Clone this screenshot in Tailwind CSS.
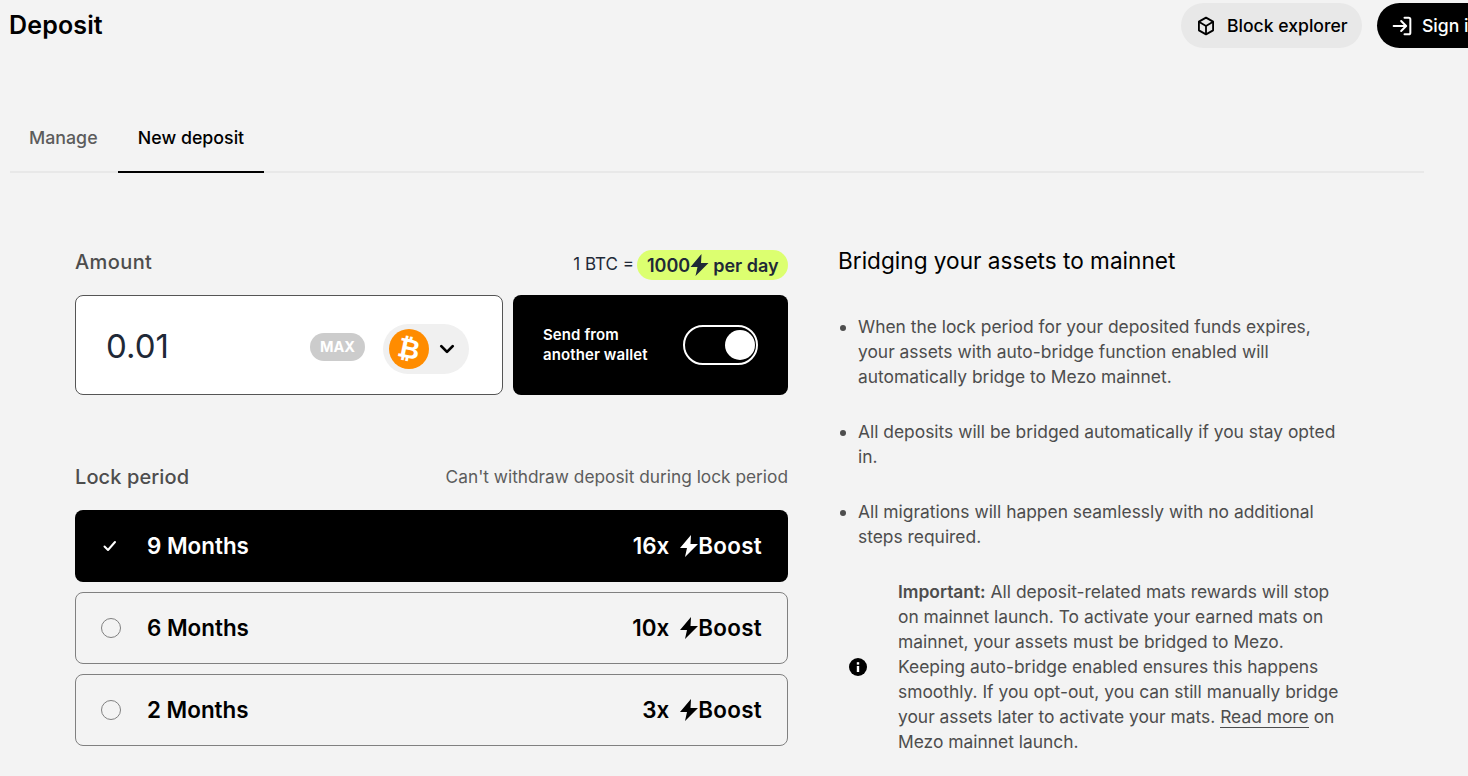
<!DOCTYPE html>
<html lang="en">
<head>
    <meta charset="UTF-8">
    <meta name="viewport" content="width=device-width, initial-scale=1.0">
    <title>Deposit</title>
    <script src="https://cdn.jsdelivr.net/npm/@tailwindcss/browser@4"></script>
</head>
<body class="bg-[#f3f3f3] font-['Inter',sans-serif] overflow-hidden">
<div class="w-[1468px] h-[776px] overflow-hidden">

    <!-- Header -->
    <header class="flex justify-between items-center h-[45px] mt-[3px] pl-[9px]">
        <h1 class="text-[25px] font-semibold text-black tracking-[0.15px]">Deposit</h1>
        <div class="flex gap-[15px] -mr-[40px]">
            <a class="flex items-center gap-[11px] w-[181px] h-[45px] pl-[15px] pt-[1px] rounded-full bg-[#e8e8e8] text-[17.6px] font-medium text-black">
                <svg class="w-[20px] h-[20px]" viewBox="0 0 24 24" fill="none" stroke="black" stroke-width="2.200" stroke-linejoin="round"><path d="M12 2l8.500 4.800v10.400L12 22l-8.500-4.800V6.800z"/><path d="M3.500 6.800L12 12l8.500-5.200M12 12v10"/></svg>
                Block explorer
            </a>
            <a class="flex items-center gap-[10px] w-[131px] h-[45px] pl-[15px] pt-[1px] rounded-full bg-black text-[17.6px] font-medium text-white">
                <svg class="w-[20px] h-[20px]" viewBox="0 0 24 24" fill="none" stroke="white" stroke-width="2.400" stroke-linecap="round" stroke-linejoin="round"><path d="M2 12h14M11 6l6 6-6 6M15 2h5a2 2 0 0 1 2 2v16a2 2 0 0 1-2 2h-5"/></svg>
                Sign in
            </a>
        </div>
    </header>

    <!-- Tabs -->
    <nav class="flex ml-[10px] w-[1414px] h-[70px] mt-[55px] border-b-2 border-[#e8e8e8] text-[17.8px] font-medium">
        <div class="w-[108px] pl-[19px] pt-[22px] text-[#5c5c5c]">Manage</div>
        <div class="w-[146px] h-[70px] pt-[22px] text-center text-black border-b-2 border-black">New deposit</div>
    </nav>

    <main class="flex ml-[75px] mt-[77px]">
        <!-- Left column -->
        <section class="w-[713px]">
            <div class="flex justify-between items-center h-[30px]">
                <span class="pb-[6px] text-[20px] font-medium text-[#4d4d4d] tracking-[0.4px]">Amount</span>
                <span class="flex items-center gap-[3px] text-[17px] text-[#1f2937]">
                    1 BTC =
                    <span class="flex items-center h-[30px] w-[151px] pl-[10px] rounded-full bg-[#dcff70] text-[18px] font-semibold">
                        1000
                        <svg class="w-[19px] h-[22px]" viewBox="0 0 18 22" fill="#1f2937"><path d="M11 0L0 13h7l-2 9 13-13h-7.500z"/></svg>
                        <span class="ml-[4px]">per day</span>
                    </span>
                </span>
            </div>

            <div class="flex gap-[10px] mt-[15px]">
                <div class="flex items-center w-[428px] h-[100px] pl-[30px] bg-white border border-[#555] rounded-[8px]">
                    <span class="mt-[3px] text-[33px] text-[#1f2937]">0.01</span>
                    <span class="ml-auto mt-[4px] flex items-center justify-center w-[55px] h-[28px] rounded-full bg-[#cccccc] text-[14.5px] font-bold text-white">MAX</span>
                    <span class="flex items-center w-[86px] h-[50px] mt-[8px] ml-[18px] mr-[33px] pl-[6px] rounded-full bg-[#f0f0f0]">
                        <svg class="w-[40px] h-[40px]" viewBox="0 0 40 40"><circle cx="20" cy="20" r="20" fill="#ff8c00"/><text x="20" y="29" text-anchor="middle" transform="rotate(12 20 20)" font-family="'Liberation Sans',sans-serif" font-size="27" font-weight="700" fill="white">₿</text></svg>
                        <svg class="w-[16px] h-[16px] ml-[10px]" viewBox="0 0 14 14" fill="none" stroke="black" stroke-width="2.400" stroke-linecap="round" stroke-linejoin="round"><path d="M2 4.500l5 5 5-5"/></svg>
                    </span>
                </div>
                <div class="flex items-center justify-between w-[275px] h-[100px] pl-[30px] pr-[30px] bg-black rounded-[8px] text-white text-[15px] leading-[20px] font-semibold tracking-[0.1px]">
                    <span>Send from<br>another wallet</span>
                    <span class="flex items-center justify-end w-[75px] h-[40px] pr-[1px] border-2 border-white rounded-full">
                        <span class="w-[30px] h-[30px] rounded-full bg-white"></span>
                    </span>
                </div>
            </div>

            <div class="flex justify-between items-center h-[30px] mt-[67px]">
                <span class="text-[20px] font-medium text-[#4d4d4d] tracking-[0.1px]">Lock period</span>
                <span class="text-[17.3px] text-[#5c5c5c]">Can't withdraw deposit during lock period</span>
            </div>

            <div class="flex flex-col gap-[10px] mt-[18px]">
                <div class="flex items-center h-[72px] pl-[27px] pr-[26px] bg-black text-white rounded-[8px] text-[22.4px] font-semibold">
                    <svg class="w-[16px] h-[16px] mr-[29px]" viewBox="0 0 16 16" fill="none" stroke="white" stroke-width="2" stroke-linecap="round" stroke-linejoin="round"><path d="M2.500 8.500l3.500 3.500 7-8"/></svg>
                    <span>9 Months</span>
                    <span class="ml-auto">16x</span>
                    <svg class="w-[18px] h-[22px] ml-[11px]" viewBox="0 0 18 22" fill="white"><path d="M11 0L0 13h7l-2 9 13-13h-7.500z"/></svg>
                    <span class="tracking-[0.3px]">Boost</span>
                </div>
                <div class="flex items-center h-[72px] pl-[25px] pr-[25px] border border-[#808080] rounded-[8px] text-black text-[22.4px] font-semibold">
                    <span class="w-[20px] h-[20px] mr-[26px] rounded-full border border-[#808080]"></span>
                    <span>6 Months</span>
                    <span class="ml-auto">10x</span>
                    <svg class="w-[18px] h-[22px] ml-[11px]" viewBox="0 0 18 22" fill="black"><path d="M11 0L0 13h7l-2 9 13-13h-7.500z"/></svg>
                    <span class="tracking-[0.3px]">Boost</span>
                </div>
                <div class="flex items-center h-[72px] pl-[25px] pr-[25px] border border-[#808080] rounded-[8px] text-black text-[22.4px] font-semibold">
                    <span class="w-[20px] h-[20px] mr-[26px] rounded-full border border-[#808080]"></span>
                    <span>2 Months</span>
                    <span class="ml-auto">3x</span>
                    <svg class="w-[18px] h-[22px] ml-[11px]" viewBox="0 0 18 22" fill="black"><path d="M11 0L0 13h7l-2 9 13-13h-7.500z"/></svg>
                    <span class="tracking-[0.3px]">Boost</span>
                </div>
            </div>
        </section>

        <!-- Right column -->
        <section class="w-[530px] ml-[50px] text-[17.4px] leading-[25px] text-[#4d4d4d]">
            <h2 class="h-[30px] -mt-[4px] text-[22.6px] leading-[30px] font-normal text-black">Bridging your assets to mainnet</h2>
            <ul class="list-disc pl-[20px] mt-[38px] flex flex-col gap-[30px]">
                <li>When the lock period for your deposited funds expires,<br>your assets with auto-bridge function enabled will<br>automatically bridge to Mezo mainnet.</li>
                <li>All deposits will be bridged automatically if you stay opted<br>in.</li>
                <li>All migrations will happen seamlessly with no additional<br>steps required.</li>
            </ul>
            <div class="flex items-center mt-[30px] pl-[10px]">
                <svg class="w-[20px] h-[20px] mr-[30px]" viewBox="0 0 20 20"><circle cx="10" cy="10" r="9" fill="black"/><rect x="8.800" y="9" width="2.400" height="6" fill="white"/><rect x="8.800" y="5.200" width="2.400" height="2.400" fill="white"/></svg>
                <p><strong class="font-semibold">Important:</strong> All deposit-related mats rewards will stop<br>on mainnet launch. To activate your earned mats on<br>mainnet, your assets must be bridged to Mezo.<br>Keeping auto-bridge enabled ensures this happens<br>smoothly. If you opt-out, you can still manually bridge<br>your assets later to activate your mats. <a class="border-b border-[#4d4d4d]">Read more</a> on<br>Mezo mainnet launch.</p>
            </div>
        </section>
    </main>
</div>
</body>
</html>
